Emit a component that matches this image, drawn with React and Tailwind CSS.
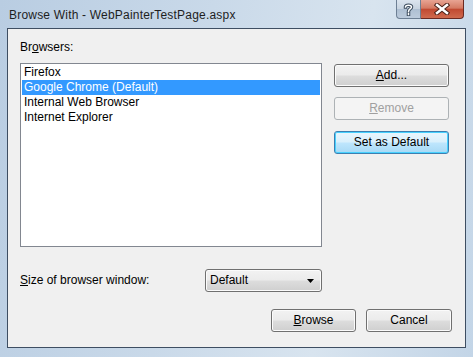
import React from "react"

const btn =
  "flex items-center justify-center rounded-[3px] border border-[#707070] bg-[linear-gradient(#f2f2f2_0%,#ebebeb_48%,#dddddd_52%,#cfcfcf_100%)] shadow-[inset_0_0_0_1px_#fbfbfb] text-black"

const Browsers = ["Firefox", "Google Chrome (Default)", "Internal Web Browser", "Internet Explorer"]

export default function App() {
  return (
    <div className="w-[473px] h-[357px] flex flex-col font-['Liberation_Sans',Arial,sans-serif] text-[12px] leading-[15px] text-black bg-[linear-gradient(100deg,#b9cde2_0%,#c9d9e9_40%,#d8e4ef_70%,#c3d5e7_100%)] overflow-hidden">
      {/* title bar */}
      <div className="h-[28px] flex items-start shrink-0">
        <div className="pl-[9px] pt-[8px] text-[#1e1e1e] tracking-[0.2px]">Browse With - WebPainterTestPage.aspx</div>
        <div className="ml-auto mr-[9px] flex">
          <div className="w-[25px] h-[19px] rounded-bl-[4px] border border-t-0 border-[#6d7f94] bg-[linear-gradient(#dbe4ee_0%,#c7d3e0_50%,#aebfd2_52%,#bccbdc_100%)] flex items-center justify-center">
            <svg width="11" height="13" viewBox="0 0 11 13">
              <path d="M2.5 4 C2.5 1.5 8.5 1.5 8.5 4 C8.5 6 5.5 6 5.5 8.5 M5.5 10.5 L5.5 11.5" fill="none" stroke="#3a4a5c" strokeWidth="3.5" strokeLinecap="square" />
              <path d="M2.5 4 C2.5 1.5 8.5 1.5 8.5 4 C8.5 6 5.5 6 5.5 8.5 M5.5 10.5 L5.5 11.5" fill="none" stroke="#ffffff" strokeWidth="1.5" strokeLinecap="square" />
            </svg>
          </div>
          <div className="w-[43px] h-[19px] rounded-br-[4px] border border-t-0 border-l-0 border-[#6b2a22] bg-[linear-gradient(#e8a493_0%,#d47a63_45%,#c14a32_52%,#cf6a4e_100%)] flex items-center justify-center">
            <svg width="16" height="12" viewBox="0 0 16 12">
              <path d="M3 2 L13 10 M13 2 L3 10" stroke="#4a2018" strokeWidth="4.5" strokeLinecap="square" />
              <path d="M3 2 L13 10 M13 2 L3 10" stroke="#ffffff" strokeWidth="2.5" strokeLinecap="square" />
            </svg>
          </div>
        </div>
      </div>

      {/* client area */}
      <div className="mx-[7px] mb-[9px] flex-1 border border-[#3e4e62] bg-[#f0f0f0] pl-[12px] pt-[11px]">
        <div className="mb-[8px]">
          Br<u>o</u>wsers:
        </div>

        <div className="flex gap-[12px]">
          <div className="w-[302px] h-[184px] border border-[#828790] bg-white pt-[1px] px-[1px]">
            {Browsers.map((b, i) => (
              <div
                key={b}
                className={
                  "h-[15px] pl-[2px] whitespace-nowrap " +
                  (i === 1 ? "bg-[#3399ff] text-white" : "")
                }
              >
                {b}
              </div>
            ))}
          </div>

          <div className="w-[115px] flex flex-col">
            <div className={btn + " mt-[1px] h-[23px]"}>
              <span><u>A</u>dd...</span>
            </div>
            <div className="mt-[10px] h-[23px] flex items-center justify-center rounded-[3px] border border-[#adb2b5] bg-[#f4f4f4] text-[#a0a0a0]">
              <span><u>R</u>emove</span>
            </div>
            <div className="mt-[11px] h-[23px] flex items-center justify-center rounded-[3px] border border-[#3c7fb1] bg-[linear-gradient(#eaf6fd_0%,#d9f0fc_48%,#bee6fd_52%,#a7d9f5_100%)] shadow-[inset_0_0_0_1px_#48d1fe]">
              <span>Set as Default</span>
            </div>
          </div>
        </div>

        <div className="mt-[22px] flex items-center">
          <div className="w-[185px]">
            <u>S</u>ize of browser window:
          </div>
          <div className={btn + " w-[117px] h-[23px] !justify-between pl-[4px] pr-[7px]"}>
            <span>Default</span>
            <svg width="7" height="4" viewBox="0 0 7 4">
              <path d="M0 0 L7 0 L3.5 4 Z" fill="#000" />
            </svg>
          </div>
        </div>

        <div className="mt-[17px] flex justify-end gap-[10px] pr-[13px]">
          <div className={btn + " w-[85px] h-[23px]"}>
            <span><u>B</u>rowse</span>
          </div>
          <div className={btn + " w-[86px] h-[23px]"}>
            <span>Cancel</span>
          </div>
        </div>
      </div>
    </div>
  )
}
